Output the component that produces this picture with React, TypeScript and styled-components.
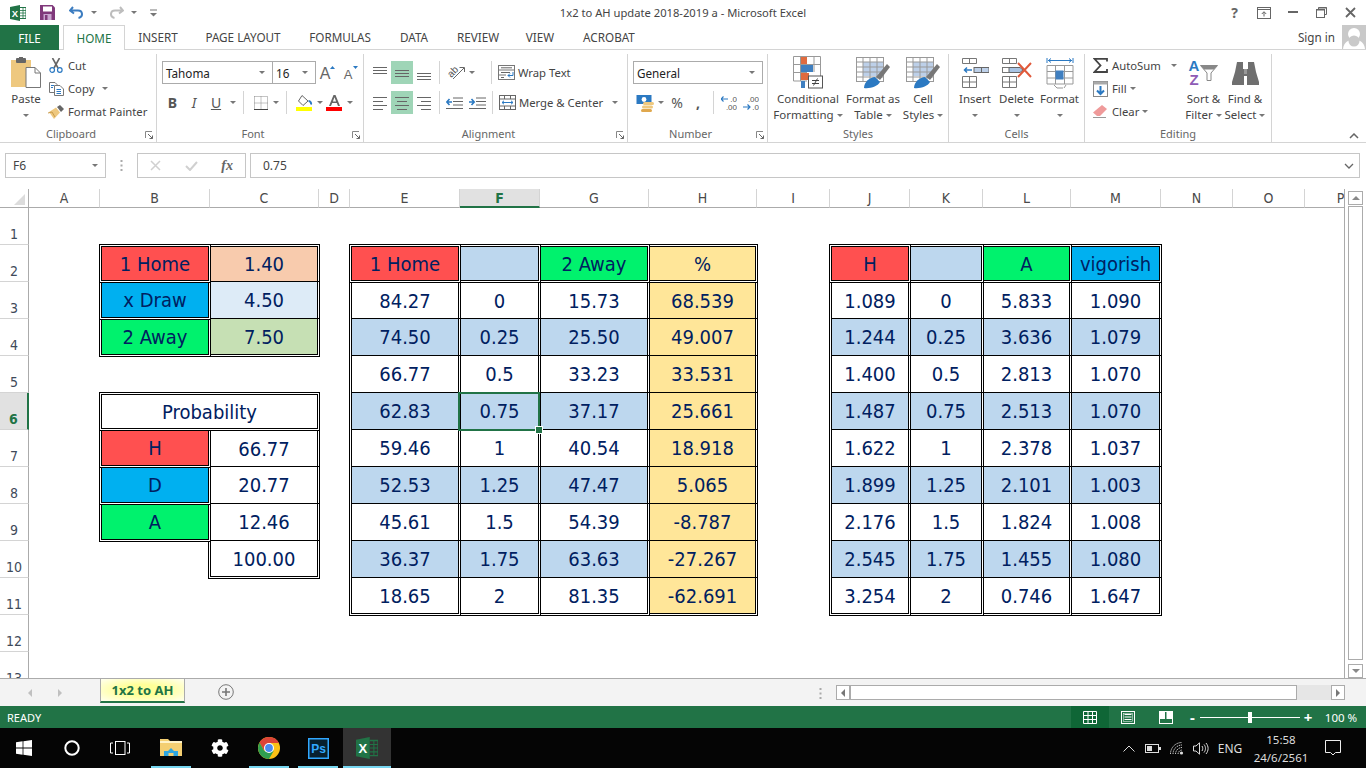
import React from 'react'
import styled, { createGlobalStyle } from 'styled-components'
import { FaCog } from 'react-icons/fa'

const uiFont = `"Noto Sans", "Open Sans", sans-serif`
const cellFont = `"DejaVu Sans Condensed", "DejaVu Sans", sans-serif`
const excelGreen = '#217346'

const GlobalStyle = createGlobalStyle`
    html, body { margin: 0; padding: 0; background: #fff; }
    body { width: 1366px; height: 768px; overflow: hidden; font-family: ${uiFont}; color: #444; }
    * { box-sizing: border-box; }
    svg { display: block; flex: none; }
`

const Page = styled.div`
    width: 1366px;
    height: 768px;
    display: flex;
    flex-direction: column;
    overflow: hidden;
`

/* title bar */
const TitleBar = styled.div`
    height: 25px;
    display: grid;
    grid-template-columns: 1fr auto 1fr;
    align-items: center;
`
const Qat = styled.div`
    display: flex;
    align-items: center;
    padding-left: 10px;
`
const QatSlot = styled.span<{ $w: number }>`
    width: ${p => p.$w}px;
    display: flex;
    align-items: center;
`
const TitleText = styled.div`
    font-size: 11.2px;
    color: #444;
`
const WindowButtons = styled.div`
    display: flex;
    justify-content: flex-end;
    align-items: center;
    padding-right: 1px;
`
const WinBtn = styled.span`
    width: 29px;
    height: 25px;
    display: flex;
    align-items: center;
    justify-content: center;
    color: #666;
    font-weight: 700;
    font-size: 14px;
`

/* tabs */
const TabRow = styled.div`
    height: 25px;
    display: flex;
    border-bottom: 1px solid #d4d4d4;
`
const FileTab = styled.div`
    width: 59px;
    height: 25px;
    margin-right: 4px;
    background: ${excelGreen};
    color: #fff;
    font-size: 11.7px;
    display: flex;
    align-items: center;
    justify-content: center;
`
const HomeTab = styled.div`
    width: 62px;
    height: 25px;
    background: #fff;
    border: 1px solid #d4d4d4;
    border-bottom: none;
    color: ${excelGreen};
    font-size: 11.7px;
    display: flex;
    align-items: center;
    justify-content: center;
`
const Tab = styled.div<{ $w: number }>`
    width: ${p => p.$w}px;
    font-size: 11.7px;
    color: #444;
    display: flex;
    align-items: center;
    justify-content: center;
`
const SignIn = styled.div`
    margin-left: auto;
    display: flex;
    align-items: center;
    font-size: 11.7px;
    gap: 7px;
`
const Avatar = styled.div`
    width: 24px;
    height: 24px;
    background: #c9c9c9;
    overflow: hidden;
`

/* ribbon */
const Ribbon = styled.div`
    height: 93px;
    display: flex;
    border-bottom: 1px solid #d4d4d4;
    position: relative;
`
const Group = styled.div<{ $w: number }>`
    width: ${p => p.$w}px;
    height: 88px;
    margin-top: 4px;
    border-right: 1px solid #d4d4d4;
    position: relative;
    display: flex;
    flex-direction: column;
`
const GroupBody = styled.div<{ $pl?: number }>`
    flex: 1;
    display: flex;
    padding-left: ${p => p.$pl ?? 0}px;
`
const GroupLabel = styled.div<{ $launcher?: boolean }>`
    height: 16px;
    line-height: 15px;
    text-align: center;
    font-size: 11px;
    color: #666;
    padding-right: ${p => (p.$launcher ? 14 : 0)}px;
`
const Launcher = styled.span`
    position: absolute;
    right: 3px;
    bottom: 3px;
`
const Collapse = styled.span`
    position: absolute;
    right: 7px;
    bottom: 3px;
`
const BigBtn = styled.div<{ $w: number }>`
    width: ${p => p.$w}px;
    display: flex;
    flex-direction: column;
    align-items: center;
    font-size: 11.5px;
    line-height: 16px;
    color: #444;
`
const BigIcon = styled.div`
    height: 37px;
    display: flex;
    align-items: center;
    justify-content: center;
`
const Line = styled.div`
    display: flex;
    align-items: center;
    gap: 3px;
    white-space: nowrap;
    height: 16px;
`
const Caret = styled.span<{ $ml?: number }>`
    display: inline-block;
    width: 0;
    height: 0;
    margin-left: ${p => p.$ml ?? 0}px;
    border-left: 3.5px solid transparent;
    border-right: 3.5px solid transparent;
    border-top: 3.5px solid #777;
    flex: none;
`
const SmallCol = styled.div<{ $w?: number }>`
    display: flex;
    flex-direction: column;
    ${p => (p.$w ? `width: ${p.$w}px;` : '')}
`
const SmallRow = styled.div`
    height: 23px;
    display: flex;
    align-items: center;
    font-size: 11.3px;
    color: #444;
    white-space: nowrap;
`
const SmallIcon = styled.span<{ $w: number }>`
    width: ${p => p.$w}px;
    display: flex;
    justify-content: center;
    flex: none;
`
const Rows = styled.div`
    display: flex;
    flex-direction: column;
    gap: 7px;
    padding-top: 7px;
`
const ToolRow = styled.div`
    height: 23px;
    display: flex;
    align-items: center;
`
const Combo = styled.div<{ $w: number }>`
    width: ${p => p.$w}px;
    height: 23px;
    border: 1px solid #ababab;
    background: #fff;
    color: #222;
    font-size: 11.7px;
    padding: 0 7px 0 3px;
    display: flex;
    align-items: center;
    justify-content: space-between;
    & + & { margin-left: -1px; }
`
const Tool = styled.span<{ $w: number; $on?: boolean }>`
    width: ${p => p.$w}px;
    height: 23px;
    display: flex;
    align-items: center;
    justify-content: center;
    font-size: 14px;
    color: #555;
    background: ${p => (p.$on ? '#9fd5b7' : 'transparent')};
    flex: none;
`
const ToolSep = styled.span<{ $ml: number; $mr: number }>`
    width: 1px;
    height: 23px;
    background: #d4d4d4;
    margin: 0 ${p => p.$mr}px 0 ${p => p.$ml}px;
    flex: none;
`
const SortLetters = styled.span`
    display: flex;
    flex-direction: column;
    align-items: center;
    font-family: "Liberation Sans", sans-serif;
    font-size: 15px;
    font-weight: 700;
    line-height: 14px;
    margin-right: 1px;
`
const SortLetter = styled.span<{ $c: string }>`
    color: ${p => p.$c};
`
const SortBox = styled.div`
    display: flex;
    align-items: center;
`

/* formula bar */
const FormulaRow = styled.div`
    height: 46px;
    padding: 10px 6px 0 5px;
    display: flex;
`
const FieldBox = styled.div`
    height: 25px;
    border: 1px solid #c6c6c6;
    background: #fff;
    font-size: 12px;
    color: #444;
    display: flex;
    align-items: center;
`
const NameBox = styled(FieldBox)`
    width: 101px;
    padding: 0 7px;
    justify-content: space-between;
`
const Grip = styled.div`
    width: 31px;
    height: 25px;
    display: flex;
    align-items: center;
    justify-content: center;
`
const FxBox = styled(FieldBox)`
    width: 109px;
    margin-right: 4px;
`
const FxSlot = styled.span`
    width: 36px;
    display: flex;
    justify-content: center;
`
const FxLabel = styled.span`
    font-family: "Liberation Serif", serif;
    font-style: italic;
    font-weight: 700;
    font-size: 14px;
    color: #666;
`
const InputBox = styled(FieldBox)`
    flex: 1;
    padding: 0 5px 0 12px;
    justify-content: space-between;
`

/* worksheet */
const SheetWrap = styled.div`
    height: 489px;
    display: flex;
`
const Sheet = styled.div`
    width: 1345px;
    height: 489px;
    overflow: hidden;
    border-right: 1px solid #ababab;
    display: grid;
    grid-template-columns: 29px 71px 110px 109px 31px 110px 80px 109px 108px 73px 80px 73px 88px 90px 72px 72px 72px;
    grid-template-rows: 19px repeat(13, 37px);
`
const Corner = styled.div`
    border-right: 1px solid #ababab;
    border-bottom: 1px solid #ababab;
    display: flex;
    align-items: flex-end;
    justify-content: flex-end;
    padding: 0 3px 2px 0;
`
const ColHead = styled.div<{ $on?: boolean }>`
    font-family: ${cellFont};
    font-size: 14px;
    line-height: 18px;
    text-align: center;
    color: ${p => (p.$on ? excelGreen : '#4a4a4a')};
    font-weight: ${p => (p.$on ? 700 : 400)};
    background: ${p => (p.$on ? '#e1e1e1' : '#fff')};
    border-right: 1px solid #d4d4d4;
    border-bottom: ${p => (p.$on ? `2px solid ${excelGreen}` : '1px solid #ababab')};
`
const RowHead = styled.div<{ $on?: boolean }>`
    font-family: ${cellFont};
    font-size: 14px;
    display: flex;
    align-items: flex-end;
    justify-content: center;
    padding-bottom: 2px;
    color: ${p => (p.$on ? excelGreen : '#3f4a5a')};
    font-weight: ${p => (p.$on ? 700 : 400)};
    background: ${p => (p.$on ? '#e1e1e1' : '#fff')};
    border-right: ${p => (p.$on ? `2px solid ${excelGreen}` : '1px solid #ababab')};
    border-bottom: 1px solid #d4d4d4;
`
type Edge = 'D' | 'T' | 'a' | 'W' | ''
const edgeMargin = (v: Edge) => (v === 'D' ? -1 : v === 'a' ? 1 : v === 'W' ? -2 : 0)
const edgeLine = (side: string, v: Edge) =>
    v === 'D' || v === 'W' ? `border-${side}: 3px double #000;` : v === 'T' ? `border-${side}: 1px solid #000;` : ''

const Cell = styled.div<{ $fill?: string; $t: Edge; $r: Edge; $b: Edge; $l: Edge; $span?: number }>`
    position: relative;
    min-width: 0;
    background: ${p => p.$fill ?? '#fff'};
    background-clip: padding-box;
    font-family: ${cellFont};
    font-size: 20px;
    color: #002060;
    display: flex;
    align-items: center;
    justify-content: center;
    margin: ${p => edgeMargin(p.$t)}px ${p => edgeMargin(p.$r)}px ${p => edgeMargin(p.$b)}px ${p => edgeMargin(p.$l)}px;
    ${p => edgeLine('top', p.$t)}
    ${p => edgeLine('right', p.$r)}
    ${p => edgeLine('bottom', p.$b)}
    ${p => edgeLine('left', p.$l)}
    ${p => (p.$span ? `grid-column: span ${p.$span};` : '')}
`
const Selection = styled.div`
    position: absolute;
    left: -3px;
    right: -2px;
    top: -1px;
    bottom: -2px;
    border: 2px solid ${excelGreen};
    z-index: 2;
`
const Handle = styled.div`
    position: absolute;
    right: -4px;
    bottom: -4px;
    width: 6px;
    height: 6px;
    background: ${excelGreen};
    box-shadow: 0 0 0 1px #fff;
`

const VScroll = styled.div`
    width: 21px;
    padding: 2px 3px 0 3px;
    display: flex;
    flex-direction: column;
    gap: 1px;
`
const ScrollBtn = styled.div<{ $h: number }>`
    height: ${p => p.$h}px;
    border: 1px solid #ababab;
    background: #fff;
    display: flex;
    align-items: center;
    justify-content: center;
    flex: none;
`
const VThumb = styled.div`
    height: 455px;
    margin-bottom: 3px;
    border: 1px solid #ababab;
    background: #fff;
`

/* sheet tabs */
const SheetBar = styled.div`
    height: 28px;
    background: #f3f3f3;
    border-top: 1px solid #ababab;
    display: flex;
`
const NavArea = styled.div`
    width: 100px;
    height: 27px;
    display: flex;
    align-items: center;
    padding-left: 26px;
    gap: 22px;
`
const SheetTab = styled.div`
    width: 85px;
    height: 24px;
    border-left: 1px solid #ababab;
    border-right: 1px solid #ababab;
    border-bottom: 2px solid ${excelGreen};
    background: radial-gradient(ellipse at center, #ffff99 35%, #fffff0 100%);
    color: ${excelGreen};
    font-size: 13px;
    font-weight: 700;
    display: flex;
    align-items: center;
    justify-content: center;
`
const AddSheet = styled.div`
    width: 16px;
    height: 16px;
    margin: 5px 0 0 33px;
`
const Dots = styled.div`
    width: 3px;
    margin: 9px 0 0 585px;
`
const HScroll = styled.div`
    margin: 6px 0 0 14px;
    width: 509px;
    height: 15px;
    display: flex;
    background: #e6e6e6;
`
const HBtn = styled.div`
    width: 14px;
    height: 15px;
    border: 1px solid #ababab;
    background: #fff;
    display: flex;
    align-items: center;
    justify-content: center;
    flex: none;
`
const HThumb = styled.div`
    width: 447px;
    margin-left: 0;
    margin-right: 34px;
    border: 1px solid #ababab;
    background: #fff;
    flex: none;
`

/* status bar */
const StatusBar = styled.div`
    height: 22px;
    background: ${excelGreen};
    color: #fff;
    font-size: 11px;
    display: flex;
    align-items: center;
    padding-left: 7px;
`
const StatusRight = styled.div`
    margin-left: auto;
    display: flex;
    align-items: center;
    height: 22px;
`
const ViewBtn = styled.div<{ $on?: boolean }>`
    width: 38px;
    height: 22px;
    background: ${p => (p.$on ? '#0f6636' : 'transparent')};
    display: flex;
    align-items: center;
    justify-content: center;
`
const ZoomSign = styled.span<{ $w: number }>`
    width: ${p => p.$w}px;
    font-size: 15px;
    font-weight: 700;
    text-align: center;
    line-height: 22px;
`
const ZoomTrack = styled.div`
    width: 100px;
    height: 1px;
    background: #fff;
    position: relative;
`
const ZoomThumb = styled.div`
    position: absolute;
    left: 48px;
    top: -5px;
    width: 4px;
    height: 11px;
    background: #fff;
`
const ZoomPct = styled.span`
    width: 50px;
    text-align: center;
    font-size: 11.5px;
`

/* taskbar */
const Taskbar = styled.div`
    height: 40px;
    background: #050505;
    color: #ddd;
    display: flex;
`
const TaskBtn = styled.div<{ $ml?: number; $open?: boolean; $active?: boolean }>`
    width: 48px;
    height: 40px;
    margin-left: ${p => p.$ml ?? 0}px;
    position: relative;
    display: flex;
    align-items: center;
    justify-content: center;
    background: ${p => (p.$active ? '#333' : 'transparent')};
    ${p =>
        p.$open
            ? `&::after {
        content: '';
        position: absolute;
        bottom: 0;
        height: 2px;
        background: #76d6f0;
        left: ${p.$active ? 0 : 4}px;
        right: ${p.$active ? 0 : 4}px;
    }`
            : ''}
`
const Tray = styled.div`
    margin-left: auto;
    display: flex;
    align-items: center;
    padding-right: 15px;
    height: 40px;
`
const TrayItem = styled.div<{ $w: number }>`
    width: ${p => p.$w}px;
    display: flex;
    align-items: center;
    justify-content: center;
    font-size: 12px;
`
const Clock = styled.div`
    width: 68px;
    padding-top: 2px;
    text-align: center;
    font-size: 11.5px;
    line-height: 18px;
`

/* ---- icons ---- */
const ExcelMark = ({ size = 16, light = false }: { size?: number; light?: boolean }) => (
    <svg width={size} height={size} viewBox="0 0 16 16">
        <path d="M0 2 L10 0 V16 L0 14 Z" fill={excelGreen} />
        <path d="M10 2.5 H16 V13.5 H10" fill={light ? '#fff' : 'none'} stroke={excelGreen} strokeWidth="1" />
        <path d="M10 5.5 H16 M10 8 H16 M10 10.8 H16 M13 2.5 V13.5" stroke={excelGreen} strokeWidth="0.8" />
        <text x="5" y="11.6" fontSize="9.5" fontWeight="700" fill="#fff" textAnchor="middle" fontFamily="Liberation Sans">X</text>
    </svg>
)
const SaveIcon = () => (
    <svg width="15" height="15" viewBox="0 0 15 15">
        <path d="M0 0 H12.5 L15 2.5 V15 H0 Z" fill="#80397b" />
        <rect x="3" y="1.5" width="9" height="5" fill="#fff" />
        <rect x="3.5" y="9" width="8" height="6" fill="#c9a6d0" />
        <rect x="5" y="10" width="2.5" height="5" fill="#80397b" />
    </svg>
)
const UndoIcon = ({ c }: { c: string }) => (
    <svg width="15" height="13" viewBox="0 0 15 13">
        <path d="M4 1 L1 4.5 L5 7.5 M1.5 4.5 H9 C14 4.5 14.5 11 9.5 12" fill="none" stroke={c} strokeWidth="2" />
    </svg>
)
const RedoIcon = ({ c }: { c: string }) => (
    <svg width="15" height="13" viewBox="0 0 15 13">
        <path d="M11 1 L14 4.5 L10 7.5 M13.5 4.5 H6 C1 4.5 0.5 11 5.5 12" fill="none" stroke={c} strokeWidth="2" />
    </svg>
)
const CustomizeIcon = () => (
    <svg width="7" height="8" viewBox="0 0 7 8">
        <path d="M0 1 H7" stroke="#777" />
        <path d="M0 4 H7 L3.5 7.5 Z" fill="#777" />
    </svg>
)
const DisplayIcon = () => (
    <svg width="14" height="12" viewBox="0 0 14 12">
        <rect x="0.5" y="0.5" width="13" height="11" fill="none" stroke="#666" />
        <path d="M0.5 2.5 H13.5" stroke="#666" />
        <path d="M7 9.5 V5 M4.8 7 L7 4.7 L9.2 7" fill="none" stroke="#666" />
    </svg>
)
const MinIcon = () => (
    <svg width="10" height="3" viewBox="0 0 10 3">
        <rect width="10" height="2" fill="#666" />
    </svg>
)
const RestoreIcon = () => (
    <svg width="11" height="11" viewBox="0 0 11 11">
        <path d="M2.5 2.5 V0.5 H10.5 V7.5 H8.5" fill="none" stroke="#666" />
        <rect x="0.5" y="2.5" width="8" height="8" fill="none" stroke="#666" />
        <path d="M0 3 H9 M2.5 1 H11" stroke="#666" />
    </svg>
)
const CloseIcon = () => (
    <svg width="11" height="11" viewBox="0 0 11 11">
        <path d="M1 1 L10 10 M10 1 L1 10" stroke="#666" strokeWidth="1.8" />
    </svg>
)
const AvatarIcon = () => (
    <svg width="24" height="24" viewBox="0 0 24 24">
        <circle cx="12" cy="9" r="6" fill="#fff" />
        <path d="M1 24 C2 16 7 15 12 15 C17 15 22 16 23 24 Z" fill="#fff" />
        <circle cx="12" cy="16" r="5.5" fill="#c9c9c9" />
    </svg>
)
const LauncherIcon = () => (
    <svg width="8" height="8" viewBox="0 0 8 8">
        <path d="M0.5 7 V0.5 H7" fill="none" stroke="#888" />
        <path d="M3 3 L7.5 7.5 M7.5 4.5 V7.5 H4.5" fill="none" stroke="#666" />
    </svg>
)
const PasteIcon = () => (
    <svg width="30" height="31" viewBox="0 0 30 31">
        <rect x="0" y="3" width="20" height="27" fill="#eec87f" />
        <rect x="5" y="1" width="10" height="5" rx="1" fill="#666" />
        <rect x="8" y="0" width="4" height="3" fill="#666" />
        <path d="M15 10.5 H24 L29.5 16 V30.5 H15 Z" fill="#fff" stroke="#777" />
        <path d="M24 10.5 V16 H29.5" fill="none" stroke="#777" />
    </svg>
)
const CutIcon = () => (
    <svg width="14" height="15" viewBox="0 0 14 15">
        <path d="M3.5 0 L9 10 M10.5 0 L5 10" stroke="#666" strokeWidth="1.6" />
        <circle cx="3.2" cy="12" r="2.3" fill="none" stroke="#2b79c2" strokeWidth="1.2" />
        <circle cx="10.8" cy="12" r="2.3" fill="none" stroke="#2b79c2" strokeWidth="1.2" />
    </svg>
)
const CopyIcon = () => (
    <svg width="15" height="14" viewBox="0 0 15 14">
        <path d="M0.5 0.5 H6 L8 2.5 V10.5 H0.5 Z" fill="#fff" stroke="#777" />
        <path d="M5.5 3.5 H11 L14.5 7 V13.5 H5.5 Z" fill="#fff" stroke="#777" />
        <path d="M7.5 7.5 H12 M7.5 9.5 H12 M7.5 11.5 H12 M2 3.5 H5 M2 5.5 H4" stroke="#2b79c2" />
    </svg>
)
const PainterIcon = () => (
    <svg width="16" height="14" viewBox="0 0 16 14">
        <path d="M9 2 L12 0 L16 4 L13 7 Z" fill="#666" />
        <path d="M1 7 L8 2.5 L12 7.5 L6 14 Z" fill="#eec87f" />
        <path d="M0 8 L4 7 L7 12" fill="none" stroke="#c99b4a" />
    </svg>
)
const GrowFont = ({ down }: { down?: boolean }) => (
    <svg width="18" height="20" viewBox="0 0 18 20">
        <text x="6" y="16" fontSize={down ? 13 : 16} textAnchor="middle" fill="#666" fontFamily="Liberation Sans">A</text>
        <path d={down ? 'M11 3 H16 L13.5 6 Z' : 'M11 6 H16 L13.5 3 Z'} fill="#2b79c2" />
    </svg>
)
const BordersIcon = () => (
    <svg width="14" height="14" viewBox="0 0 14 14">
        <path d="M0.5 0.5 H13.5 V13.5 M0.5 0.5 V13.5 M7 0.5 V13.5 M0.5 7 H13.5" fill="none" stroke="#888" strokeDasharray="1 1" />
        <path d="M0 13.5 H14" stroke="#444" />
    </svg>
)
const FillIcon = () => (
    <svg width="17" height="16" viewBox="0 0 17 16">
        <path d="M6 0.5 L12 6 L7 10.5 L2.5 6 Z" fill="#fff" stroke="#666" />
        <path d="M12.5 6 C14.5 6 15.5 8 15 9.5" fill="none" stroke="#2b79c2" strokeWidth="2" />
        <rect y="12" width="16" height="4" fill="#ffff00" />
    </svg>
)
const FontColorIcon = () => (
    <svg width="17" height="17" viewBox="0 0 17 17">
        <path d="M3 12 L7.5 1 H9.5 L14 12 H12 L10.8 9 H6.2 L5 12 Z M6.9 7.4 H10.1 L8.5 3.2 Z" fill="#666" fillRule="evenodd" />
        <rect y="13" width="16" height="4" fill="#ff0000" />
    </svg>
)
const AlignLines = ({ lines }: { lines: [number, number, number][] }) => (
    <svg width="15" height="16" viewBox="0 0 15 16">
        {lines.map(([x, w, y]) => (
            <rect key={y} x={x} y={y} width={w} height="1" fill="#666" />
        ))}
    </svg>
)
const Lines3 = (a: number, x: number[], w: number[]) =>
    <AlignLines lines={[[x[0], w[0], a], [x[1], w[1], a + 3], [x[2], w[2], a + 6]]} />
const AlignLines4 = ({ kind }: { kind: 'l' | 'c' | 'r' }) => {
    const ws = [14, 10, 14, 10]
    return (
        <AlignLines
            lines={ws.map((w, i) => [kind === 'l' ? 0 : kind === 'r' ? 14 - w : (14 - w) / 2, w, 2 + i * 4] as [number, number, number])}
        />
    )
}
const OrientIcon = () => (
    <svg width="24" height="22" viewBox="0 0 24 22">
        <text x="9" y="13" fontSize="10" fill="#555" textAnchor="middle" transform="rotate(-45 9 10)" fontFamily="Liberation Sans">ab</text>
        <path d="M9 17 L20 6 M15.5 5.5 H20.5 V10" fill="none" stroke="#666" />
    </svg>
)
const IndentIcon = ({ out }: { out?: boolean }) => (
    <svg width="17" height="12" viewBox="0 0 17 12">
        <path d="M7 1 H17 M7 4.5 H17 M7 8 H17 M0 11.5 H17" stroke="#666" />
        <path d={out ? 'M6 5 H1 M3.5 2 L0.8 5 L3.5 8' : 'M0 5 H5 M2.5 2 L5.2 5 L2.5 8'} fill="none" stroke="#2b79c2" strokeWidth="1.6" />
    </svg>
)
const WrapIcon = () => (
    <svg width="17" height="15" viewBox="0 0 17 15">
        <rect x="0.5" y="0.5" width="16" height="14" fill="#fff" stroke="#777" />
        <path d="M0.5 5 H16.5 M0.5 10 H8" stroke="#777" />
        <path d="M3 2.8 H14 M3 7.5 H12 M3 12.5 H6" stroke="#666" />
        <path d="M15 7 V10.5 H10 M12 8.5 L10 10.5 L12 12.5" fill="none" stroke="#2b79c2" />
    </svg>
)
const MergeIcon = () => (
    <svg width="17" height="15" viewBox="0 0 17 15">
        <rect x="0.5" y="0.5" width="16" height="14" fill="#fff" stroke="#666" />
        <path d="M0.5 4 H16.5 M0.5 11 H16.5 M5.5 0.5 V4 M11.5 0.5 V4 M5.5 11 V14.5 M11.5 11 V14.5" stroke="#666" />
        <path d="M3 7.5 H14 M5 5.8 L3 7.5 L5 9.2 M12 5.8 L14 7.5 L12 9.2" fill="none" stroke="#2b79c2" />
    </svg>
)
const CurrencyIcon = () => (
    <svg width="19" height="18" viewBox="0 0 19 18">
        <rect x="0.5" y="1" width="15" height="9" fill="#2b79c2" />
        <circle cx="8" cy="5.5" r="2.4" fill="#fff" />
        <rect x="7" y="8" width="11" height="3" rx="1.5" fill="#eec87f" />
        <rect x="6" y="11.5" width="11" height="3" rx="1.5" fill="#eec87f" />
        <rect x="5" y="15" width="11" height="3" rx="1.5" fill="#e0a84e" />
    </svg>
)
const DecIcon = ({ less }: { less?: boolean }) => (
    <svg width="16" height="20" viewBox="0 0 16 20">
        <text x="16" y="9" fontSize="8" fill="#555" textAnchor="end" fontFamily="Liberation Sans">{less ? '.00' : '.0'}</text>
        <text x="16" y="17" fontSize="8" fill="#555" textAnchor="end" fontFamily="Liberation Sans">{less ? '.0' : '.00'}</text>
        <path d={less ? 'M0 14 H7 M4.5 11.5 L7 14 L4.5 16.5' : 'M0 6 H7 M2.5 3.5 L0 6 L2.5 8.5'} fill="none" stroke="#2b79c2" strokeWidth="1.2" />
    </svg>
)
const CondIcon = () => (
    <svg width="30" height="33" viewBox="0 0 30 33">
        <path d="M0.5 0.5 H27.5 V25 M0.5 0.5 V25 H14 M0.5 8.5 H27.5 M0.5 16.5 H14 M7.5 0.5 V25 M21 0.5 V16" fill="none" stroke="#999" />
        <rect x="8" y="1" width="6" height="7" fill="#e06b3f" />
        <rect x="8" y="9" width="12" height="7" fill="#3f7fc0" />
        <rect x="8" y="17" width="8" height="7" fill="#e06b3f" />
        <rect x="8" y="25" width="4" height="7" fill="#3f7fc0" />
        <rect x="15.5" y="20" width="14" height="12" fill="#fff" stroke="#555" />
        <path d="M19 24.5 H26 M19 27.5 H26 M24.5 22.5 L20.5 29.5" stroke="#444" />
    </svg>
)
const TableStyleIcon = () => (
    <svg width="34" height="32" viewBox="0 0 34 32">
        <rect x="0.5" y="0.5" width="27" height="24" fill="#fff" stroke="#999" />
        <rect x="7" y="5" width="20" height="14" fill="#bdd0e9" />
        <path d="M0.5 5 H27.5 M0.5 10 H27.5 M0.5 15 H27.5 M0.5 20 H27.5 M7 0.5 V25 M14 0.5 V25 M21 0.5 V25" stroke="#999" />
        <path d="M20 20 L31 7 L34 10 L24 23 Z" fill="#777" />
        <path d="M8 31 C8 25 14 20 19 20 L24 25 C22 29 14 32 8 31 Z" fill="#2b79c2" />
    </svg>
)
const InsertIcon = () => (
    <svg width="27" height="30" viewBox="0 0 27 30">
        <path d="M0.5 0.5 H14.5 V5.5 H0.5 Z M7.5 0.5 V5.5 M0.5 18.5 H14.5 V29.5 H0.5 Z M7.5 18.5 V29.5 M0.5 24 H14.5" fill="#fff" stroke="#777" />
        <rect x="12" y="9.5" width="15" height="5" fill="#bdd0e9" stroke="#666" />
        <path d="M19.5 9.5 V14.5" stroke="#666" />
        <path d="M10 12 H2.5 M5 9.5 L2.5 12 L5 14.5" fill="none" stroke="#2b79c2" strokeWidth="1.5" />
    </svg>
)
const DeleteIcon = () => (
    <svg width="30" height="30" viewBox="0 0 30 30">
        <path d="M0.5 0.5 H14.5 V5.5 H0.5 Z M7.5 0.5 V5.5 M0.5 18.5 H14.5 V29.5 H0.5 Z M7.5 18.5 V29.5 M0.5 24 H14.5" fill="#fff" stroke="#777" />
        <rect x="0.5" y="9.5" width="8" height="5" fill="#fff" stroke="#777" />
        <path d="M7 9.5 H18 L21 12 L18 14.5 H7 Z" fill="#a9c4e4" stroke="#666" />
        <path d="M16 5 L29 19 M29 5 L16 19" stroke="#e0593a" strokeWidth="2" />
    </svg>
)
const FormatCellsIcon = () => (
    <svg width="28" height="32" viewBox="0 0 28 32">
        <path d="M1 1 V6 M27 1 V6 M2 3.5 H26 M5 1.5 L2.5 3.5 L5 5.5 M23 1.5 L25.5 3.5 L23 5.5" fill="none" stroke="#2b79c2" />
        <path d="M1 8.5 H27 V27 H1 Z M1 14.5 H27 M1 21 H27 M9.5 8.5 V27 M18.5 8.5 V27" fill="#fff" stroke="#999" />
        <rect x="9.5" y="13.5" width="8" height="9" fill="#3f7fc0" />
        <path d="M8 28 L11 31 H17 M20 28 L18 31" fill="none" stroke="#999" />
    </svg>
)
const SigmaIcon = () => (
    <svg width="15" height="15" viewBox="0 0 15 15">
        <path d="M14 3.5 V0.8 H1.5 L7.5 7.5 L1.5 14 H14 V11" fill="none" stroke="#444" strokeWidth="1.8" />
    </svg>
)
const DownFillIcon = () => (
    <svg width="15" height="16" viewBox="0 0 15 16">
        <rect x="0.5" y="0.5" width="14" height="15" fill="#fff" stroke="#888" />
        <rect x="0.5" y="0.5" width="14" height="3" fill="#aaa" />
        <path d="M7.5 5 V13 M4 9.5 L7.5 13 L11 9.5" fill="none" stroke="#2b79c2" strokeWidth="2" />
    </svg>
)
const EraserIcon = () => (
    <svg width="14" height="13" viewBox="0 0 14 13">
        <path d="M9 0 L14 4 L7 11 H4 L0 7.5 Z" fill="#ef9a9a" />
        <path d="M0 12.5 H13" stroke="#999" />
    </svg>
)
const SortIcon = () => (
    <SortBox>
        <SortLetters>
            <SortLetter $c="#2b79c2">A</SortLetter>
            <SortLetter $c="#8e5bb5">Z</SortLetter>
        </SortLetters>
        <svg width="18" height="16" viewBox="0 0 18 16">
            <path d="M0.5 0.5 H17.5 L11 8 V15.5 H7 V8 Z" fill="#fff" stroke="#888" />
            <path d="M0.5 0.5 H17.5 L14 4.5 H4 Z" fill="#888" />
        </svg>
    </SortBox>
)
const FindIcon = () => (
    <svg width="27" height="24" viewBox="0 0 27 24">
        <path d="M5 1 H11 V8 H16 V1 H22 L24 11 L27 21 V24 H15 V15 H12 V24 H0 V21 L3 11 Z" fill="#6f6f6f" />
        <path d="M12 8 H15 V13 H12 Z" fill="#999" />
    </svg>
)
const Tri = ({ dir, c = '#888', s = 8 }: { dir: 'u' | 'd' | 'l' | 'r'; c?: string; s?: number }) => {
    const d = { u: 'M0 6 H8 L4 2 Z', d: 'M0 2 H8 L4 6 Z', l: 'M6 0 V8 L2 4 Z', r: 'M2 0 V8 L6 4 Z' }[dir]
    return (
        <svg width={s} height={s} viewBox="0 0 8 8">
            <path d={d} fill={c} />
        </svg>
    )
}
const WinLogo = () => (
    <svg width="16" height="16" viewBox="0 0 16 16">
        <path d="M0 2.2 L6.6 1.3 V7.5 H0 Z M7.4 1.2 L16 0 V7.5 H7.4 Z M0 8.4 H6.6 V14.7 L0 13.8 Z M7.4 8.4 H16 V16 L7.4 14.8 Z" fill="#fff" />
    </svg>
)
const ExplorerIcon = () => (
    <svg width="22" height="20" viewBox="0 0 22 20">
        <path d="M0 1 H8 L10 3 H22 V18 H0 Z" fill="#f4cf72" />
        <rect x="0" y="3" width="22" height="2" fill="#fff3c8" />
        <path d="M4 18 V13 H8 L11 10 L14 13 H18 V18 H13.5 V15 H8.5 V18 Z" fill="#2fa6e0" />
    </svg>
)
const ChromeIcon = () => (
    <svg width="22" height="22" viewBox="0 0 22 22">
        <circle cx="11" cy="11" r="11" fill="#fbc116" />
        <path d="M11 0 A11 11 0 0 0 1.5 5.5 L6.2 13.8 L11 6 H21 A11 11 0 0 0 11 0 Z" fill="#dc4437" />
        <path d="M1.5 5.5 A11 11 0 0 0 11 22 L15.8 13.8 L6.2 13.8 Z" fill="#2f9e4f" />
        <circle cx="11" cy="11" r="5" fill="#fff" />
        <circle cx="11" cy="11" r="3.9" fill="#4a8bf0" />
    </svg>
)
const PsIcon = () => (
    <svg width="21" height="21" viewBox="0 0 21 21">
        <rect x="0.75" y="0.75" width="19.5" height="19.5" fill="#07202f" stroke="#31a8ff" strokeWidth="1.5" />
        <text x="10.5" y="15" fontSize="12" fontWeight="700" fill="#31a8ff" textAnchor="middle" fontFamily="Liberation Sans">Ps</text>
    </svg>
)
const TaskViewIcon = () => (
    <svg width="20" height="14" viewBox="0 0 20 14">
        <rect x="5.5" y="0.5" width="9.5" height="13" fill="none" stroke="#fff" />
        <path d="M3 2 H0.5 V12 H3 M17 2 H19.5 V12 H17" fill="none" stroke="#fff" />
    </svg>
)
const TrayCaret = () => (
    <svg width="12" height="7" viewBox="0 0 12 7">
        <path d="M0.5 6.5 L6 1 L11.5 6.5" fill="none" stroke="#ddd" />
    </svg>
)
const BatteryIcon = () => (
    <svg width="16" height="9" viewBox="0 0 16 9">
        <rect x="0.5" y="0.5" width="13" height="8" fill="none" stroke="#ddd" />
        <rect x="2" y="2" width="5" height="5" fill="#ddd" />
        <rect x="14" y="3" width="2" height="3" fill="#ddd" />
    </svg>
)
const WifiIcon = () => (
    <svg width="14" height="13" viewBox="0 0 14 13">
        <path d="M0.5 12 C0.5 5.5 5.5 0.5 12 0.5 M3 12 C3 7 7 3 12 3 M5.5 12 C5.5 8.5 8.5 5.5 12 5.5 M8 12 C8 10 10 8 12 8" fill="none" stroke="#ccc" strokeDasharray="1.4 0.8" />
        <circle cx="11.5" cy="11" r="1.6" fill="#ddd" />
    </svg>
)
const VolumeIcon = () => (
    <svg width="16" height="13" viewBox="0 0 16 13">
        <path d="M0.5 4 H3 L6.5 0.8 V12.2 L3 9 H0.5 Z" fill="none" stroke="#ddd" />
        <path d="M9 4 C10 5.5 10 7.5 9 9 M11 2.5 C13 5 13 8 11 10.5 M13 1 C15.8 4.5 15.8 8.5 13 12" fill="none" stroke="#ddd" />
    </svg>
)
const ActionIcon = () => (
    <svg width="16" height="16" viewBox="0 0 16 16">
        <path d="M0.5 0.5 H15.5 V12.5 H10.5 L8 15 L5.5 12.5 H0.5 Z" fill="none" stroke="#eee" />
    </svg>
)
const GridViewIcon = () => (
    <svg width="14" height="13" viewBox="0 0 14 13">
        <path d="M0.5 0.5 H13.5 V12.5 H0.5 Z M0.5 4.5 H13.5 M0.5 8.5 H13.5 M5 0.5 V12.5 M9.5 0.5 V12.5" fill="none" stroke="#fff" />
    </svg>
)
const PageViewIcon = () => (
    <svg width="14" height="13" viewBox="0 0 14 13">
        <rect x="0.5" y="0.5" width="13" height="12" fill="none" stroke="#fff" />
        <path d="M3.5 3.5 H10.5 M3.5 6 H10.5 M3.5 8.5 H10.5" stroke="#fff" />
        <rect x="2.5" y="2.5" width="9" height="8" fill="none" stroke="#fff" strokeWidth="0.5" />
    </svg>
)
const BreakViewIcon = () => (
    <svg width="14" height="13" viewBox="0 0 14 13">
        <rect x="0.5" y="0.5" width="13" height="12" fill="none" stroke="#fff" />
        <rect x="1" y="1" width="5" height="7" fill="#fff" />
        <rect x="7.5" y="1" width="5.5" height="7" fill="#fff" />
    </svg>
)

/* ---- sheet data ---- */
interface CellSpec {
    text?: string
    fill?: string
    t: Edge
    r: Edge
    b: Edge
    l: Edge
    span?: number
}
const RED = '#ff5050'
const SKY = '#00b0f0'
const LIME = '#00f26d'
const BAND = '#bdd7ee'
const GOLD = '#ffe699'

const cells: Record<string, CellSpec> = {}

// rate block
;[
    ['1 Home', RED, '1.40', '#f8cbad'],
    ['x Draw', SKY, '4.50', '#ddebf7'],
    ['2 Away', LIME, '7.50', '#c6e0b4'],
].forEach(([label, labelFill, value, valueFill], i) => {
    const row = i + 2
    cells[`B${row}`] = { text: label, fill: labelFill, t: i === 0 ? 'D' : 'a', r: 'D', b: 'D', l: 'D' }
    cells[`C${row}`] = { text: value, fill: valueFill, t: i === 0 ? 'D' : '', r: 'D', b: i === 2 ? 'D' : 'T', l: 'a' }
})

// probability block
cells.B6 = { text: 'Probability', t: 'D', r: 'D', b: 'D', l: 'D', span: 2 }
;[
    ['H', RED, '66.77'],
    ['D', SKY, '20.77'],
    ['A', LIME, '12.46'],
].forEach(([label, fill, value], i) => {
    const row = i + 7
    cells[`B${row}`] = { text: label, fill, t: 'a', r: 'D', b: 'D', l: 'D' }
    cells[`C${row}`] = { text: value, t: i === 0 ? 'a' : '', r: 'D', b: 'T', l: 'a' }
})
cells.C10 = { text: '100.00', t: '', r: 'D', b: 'D', l: 'W' }

const fillTable = (
    columns: string[],
    head: [string, string][],
    body: string[][],
    lastFill?: string,
) => {
    head.forEach(([text, fill], c) => {
        cells[`${columns[c]}2`] = { text, fill, t: 'D', r: 'D', b: 'D', l: c === 0 ? 'D' : 'a' }
    })
    body.forEach((values, i) => {
        const row = i + 3
        values.forEach((text, c) => {
            const band = i % 2 === 1 ? BAND : undefined
            cells[`${columns[c]}${row}`] = {
                text,
                fill: lastFill && c === 3 ? lastFill : band,
                t: i === 0 ? 'a' : '',
                r: 'D',
                b: i === body.length - 1 ? 'D' : 'T',
                l: c === 0 ? 'D' : 'a',
            }
        })
    })
}

fillTable(
    ['E', 'F', 'G', 'H'],
    [['1 Home', RED], ['', BAND], ['2 Away', LIME], ['%', GOLD]],
    [
        ['84.27', '0', '15.73', '68.539'],
        ['74.50', '0.25', '25.50', '49.007'],
        ['66.77', '0.5', '33.23', '33.531'],
        ['62.83', '0.75', '37.17', '25.661'],
        ['59.46', '1', '40.54', '18.918'],
        ['52.53', '1.25', '47.47', '5.065'],
        ['45.61', '1.5', '54.39', '-8.787'],
        ['36.37', '1.75', '63.63', '-27.267'],
        ['18.65', '2', '81.35', '-62.691'],
    ],
    GOLD,
)
fillTable(
    ['J', 'K', 'L', 'M'],
    [['H', RED], ['', BAND], ['A', LIME], ['vigorish', SKY]],
    [
        ['1.089', '0', '5.833', '1.090'],
        ['1.244', '0.25', '3.636', '1.079'],
        ['1.400', '0.5', '2.813', '1.070'],
        ['1.487', '0.75', '2.513', '1.070'],
        ['1.622', '1', '2.378', '1.037'],
        ['1.899', '1.25', '2.101', '1.003'],
        ['2.176', '1.5', '1.824', '1.008'],
        ['2.545', '1.75', '1.455', '1.080'],
        ['3.254', '2', '0.746', '1.647'],
    ],
)

const COLUMNS = 'ABCDEFGHIJKLMNOP'.split('')
const ROWS = Array.from({ length: 13 }, (_, i) => i + 1)

function Worksheet() {
    return (
        <Sheet>
            <Corner>
                <svg width="11" height="11" viewBox="0 0 11 11">
                    <path d="M11 0 V11 H0 Z" fill="#dcdcdc" />
                </svg>
            </Corner>
            {COLUMNS.map(c => (
                <ColHead key={c} $on={c === 'F'}>{c}</ColHead>
            ))}
            {ROWS.map(row => (
                <React.Fragment key={row}>
                    <RowHead $on={row === 6}>{row}</RowHead>
                    {COLUMNS.map(c => {
                        if (c === 'C' && row === 6) return null
                        const spec = cells[`${c}${row}`]
                        if (!spec) return <div key={c} />
                        return (
                            <Cell
                                key={c}
                                $fill={spec.fill}
                                $t={spec.t}
                                $r={spec.r}
                                $b={spec.b}
                                $l={spec.l}
                                $span={spec.span}
                            >
                                {spec.text}
                                {c === 'F' && row === 6 && (
                                    <Selection>
                                        <Handle />
                                    </Selection>
                                )}
                            </Cell>
                        )
                    })}
                </React.Fragment>
            ))}
        </Sheet>
    )
}

function RibbonBar() {
    return (
        <Ribbon>
            <Group $w={157}>
                <GroupBody $pl={5}>
                    <BigBtn $w={42}>
                        <BigIcon><PasteIcon /></BigIcon>
                        <Line>Paste</Line>
                        <Line><Caret /></Line>
                    </BigBtn>
                    <SmallCol>
                        <SmallRow><SmallIcon $w={18}><CutIcon /></SmallIcon>&nbsp;Cut</SmallRow>
                        <SmallRow><SmallIcon $w={18}><CopyIcon /></SmallIcon>&nbsp;Copy<Caret $ml={8} /></SmallRow>
                        <SmallRow><SmallIcon $w={18}><PainterIcon /></SmallIcon>&nbsp;Format Painter</SmallRow>
                    </SmallCol>
                </GroupBody>
                <GroupLabel $launcher>Clipboard</GroupLabel>
                <Launcher><LauncherIcon /></Launcher>
            </Group>

            <Group $w={207}>
                <GroupBody $pl={5}>
                    <Rows>
                        <ToolRow>
                            <Combo $w={111}>Tahoma<Caret /></Combo>
                            <Combo $w={44}>16<Caret /></Combo>
                            <Tool $w={24}><GrowFont /></Tool>
                            <Tool $w={22}><GrowFont down /></Tool>
                        </ToolRow>
                        <ToolRow>
                            <Tool $w={21}><b>B</b></Tool>
                            <Tool $w={22}><i>I</i></Tool>
                            <Tool $w={22}><u>U</u></Tool>
                            <Caret $ml={3} />
                            <ToolSep $ml={7} $mr={7} />
                            <Tool $w={20}><BordersIcon /></Tool>
                            <Caret $ml={2} />
                            <ToolSep $ml={7} $mr={7} />
                            <Tool $w={20}><FillIcon /></Tool>
                            <Caret $ml={3} />
                            <Tool $w={22}><FontColorIcon /></Tool>
                            <Caret $ml={2} />
                        </ToolRow>
                    </Rows>
                </GroupBody>
                <GroupLabel $launcher>Font</GroupLabel>
                <Launcher><LauncherIcon /></Launcher>
            </Group>

            <Group $w={264}>
                <GroupBody $pl={5}>
                    <Rows>
                        <ToolRow>
                            <Tool $w={22}>{Lines3(2, [0, 0, 0], [14, 14, 14])}</Tool>
                            <Tool $w={22} $on>{Lines3(5, [0, 0, 0], [14, 14, 14])}</Tool>
                            <Tool $w={22}>{Lines3(8, [0, 0, 0], [14, 14, 14])}</Tool>
                            <ToolSep $ml={4} $mr={4} />
                            <Tool $w={24}><OrientIcon /></Tool>
                            <Caret $ml={1} />
                            <ToolSep $ml={16} $mr={5} />
                            <Tool $w={18}><WrapIcon /></Tool>
                            <SmallRow>&nbsp;Wrap Text</SmallRow>
                        </ToolRow>
                        <ToolRow>
                            <Tool $w={22}><AlignLines4 kind="l" /></Tool>
                            <Tool $w={22} $on><AlignLines4 kind="c" /></Tool>
                            <Tool $w={22}><AlignLines4 kind="r" /></Tool>
                            <ToolSep $ml={4} $mr={4} />
                            <Tool $w={21}><IndentIcon out /></Tool>
                            <Tool $w={24}><IndentIcon /></Tool>
                            <ToolSep $ml={3} $mr={5} />
                            <Tool $w={18}><MergeIcon /></Tool>
                            <SmallRow>&nbsp;Merge &amp; Center<Caret $ml={9} /></SmallRow>
                        </ToolRow>
                    </Rows>
                </GroupBody>
                <GroupLabel $launcher>Alignment</GroupLabel>
                <Launcher><LauncherIcon /></Launcher>
            </Group>

            <Group $w={140}>
                <GroupBody $pl={5}>
                    <Rows>
                        <ToolRow>
                            <Combo $w={130}>General<Caret /></Combo>
                        </ToolRow>
                        <ToolRow>
                            <Tool $w={24}><CurrencyIcon /></Tool>
                            <Caret $ml={1} />
                            <Tool $w={26}>%</Tool>
                            <Tool $w={16}><b>,</b></Tool>
                            <ToolSep $ml={7} $mr={7} />
                            <Tool $w={16}><DecIcon /></Tool>
                            <Tool $w={28}><DecIcon less /></Tool>
                        </ToolRow>
                    </Rows>
                </GroupBody>
                <GroupLabel $launcher>Number</GroupLabel>
                <Launcher><LauncherIcon /></Launcher>
            </Group>

            <Group $w={181}>
                <GroupBody $pl={7}>
                    <BigBtn $w={66}>
                        <BigIcon><CondIcon /></BigIcon>
                        <Line>Conditional</Line>
                        <Line>Formatting<Caret /></Line>
                    </BigBtn>
                    <BigBtn $w={64}>
                        <BigIcon><TableStyleIcon /></BigIcon>
                        <Line>Format as</Line>
                        <Line>Table<Caret /></Line>
                    </BigBtn>
                    <BigBtn $w={36}>
                        <BigIcon><TableStyleIcon /></BigIcon>
                        <Line>Cell</Line>
                        <Line>Styles<Caret /></Line>
                    </BigBtn>
                </GroupBody>
                <GroupLabel>Styles</GroupLabel>
            </Group>

            <Group $w={136}>
                <GroupBody $pl={8}>
                    <BigBtn $w={36}>
                        <BigIcon><InsertIcon /></BigIcon>
                        <Line>Insert</Line>
                        <Line><Caret /></Line>
                    </BigBtn>
                    <BigBtn $w={47}>
                        <BigIcon><DeleteIcon /></BigIcon>
                        <Line>Delete</Line>
                        <Line><Caret /></Line>
                    </BigBtn>
                    <BigBtn $w={39}>
                        <BigIcon><FormatCellsIcon /></BigIcon>
                        <Line>Format</Line>
                        <Line><Caret /></Line>
                    </BigBtn>
                </GroupBody>
                <GroupLabel>Cells</GroupLabel>
            </Group>

            <Group $w={187}>
                <GroupBody $pl={6}>
                    <SmallCol $w={93}>
                        <SmallRow><SmallIcon $w={18}><SigmaIcon /></SmallIcon>&nbsp;AutoSum<Caret $ml={10} /></SmallRow>
                        <SmallRow><SmallIcon $w={18}><DownFillIcon /></SmallIcon>&nbsp;Fill<Caret $ml={3} /></SmallRow>
                        <SmallRow><SmallIcon $w={18}><EraserIcon /></SmallIcon>&nbsp;Clear<Caret $ml={3} /></SmallRow>
                    </SmallCol>
                    <BigBtn $w={39}>
                        <BigIcon><SortIcon /></BigIcon>
                        <Line>Sort &amp;</Line>
                        <Line>Filter<Caret /></Line>
                    </BigBtn>
                    <BigBtn $w={44}>
                        <BigIcon><FindIcon /></BigIcon>
                        <Line>Find &amp;</Line>
                        <Line>Select<Caret /></Line>
                    </BigBtn>
                </GroupBody>
                <GroupLabel>Editing</GroupLabel>
            </Group>

            <Collapse>
                <svg width="10" height="6" viewBox="0 0 10 6">
                    <path d="M1 5 L5 1 L9 5" fill="none" stroke="#666" strokeWidth="1.5" />
                </svg>
            </Collapse>
        </Ribbon>
    )
}

export default function App() {
    return (
        <Page>
            <GlobalStyle />
            <TitleBar>
                <Qat>
                    <QatSlot $w={30}><ExcelMark /></QatSlot>
                    <QatSlot $w={29}><SaveIcon /></QatSlot>
                    <QatSlot $w={22}><UndoIcon c="#3b7cc0" /></QatSlot>
                    <QatSlot $w={18}><Caret /></QatSlot>
                    <QatSlot $w={22}><RedoIcon c="#bdbdbd" /></QatSlot>
                    <QatSlot $w={19}><Caret /></QatSlot>
                    <QatSlot $w={10}><CustomizeIcon /></QatSlot>
                </Qat>
                <TitleText>1x2 to AH update 2018-2019 a - Microsoft Excel</TitleText>
                <WindowButtons>
                    <WinBtn>?</WinBtn>
                    <WinBtn><DisplayIcon /></WinBtn>
                    <WinBtn><MinIcon /></WinBtn>
                    <WinBtn><RestoreIcon /></WinBtn>
                    <WinBtn><CloseIcon /></WinBtn>
                </WindowButtons>
            </TitleBar>

            <TabRow>
                <FileTab>FILE</FileTab>
                <HomeTab>HOME</HomeTab>
                <Tab $w={66}>INSERT</Tab>
                <Tab $w={104}>PAGE LAYOUT</Tab>
                <Tab $w={90}>FORMULAS</Tab>
                <Tab $w={58}>DATA</Tab>
                <Tab $w={70}>REVIEW</Tab>
                <Tab $w={54}>VIEW</Tab>
                <Tab $w={84}>ACROBAT</Tab>
                <SignIn>
                    Sign in
                    <Avatar><AvatarIcon /></Avatar>
                </SignIn>
            </TabRow>

            <RibbonBar />

            <FormulaRow>
                <NameBox>F6<Caret /></NameBox>
                <Grip>
                    <svg width="3" height="11" viewBox="0 0 3 11">
                        <path d="M1.5 0 V2 M1.5 4.5 V6.5 M1.5 9 V11" stroke="#aaa" strokeWidth="2" />
                    </svg>
                </Grip>
                <FxBox>
                    <FxSlot>
                        <svg width="11" height="11" viewBox="0 0 11 11">
                            <path d="M1 1 L10 10 M10 1 L1 10" stroke="#d0d0d0" strokeWidth="1.5" />
                        </svg>
                    </FxSlot>
                    <FxSlot>
                        <svg width="13" height="10" viewBox="0 0 13 10">
                            <path d="M1 5 L5 9 L12 1" fill="none" stroke="#d0d0d0" strokeWidth="2" />
                        </svg>
                    </FxSlot>
                    <FxSlot><FxLabel>fx</FxLabel></FxSlot>
                </FxBox>
                <InputBox>
                    0.75
                    <svg width="10" height="6" viewBox="0 0 10 6">
                        <path d="M1 1 L5 5 L9 1" fill="none" stroke="#666" strokeWidth="1.3" />
                    </svg>
                </InputBox>
            </FormulaRow>

            <SheetWrap>
                <Worksheet />
                <VScroll>
                    <ScrollBtn $h={14}><Tri dir="u" /></ScrollBtn>
                    <VThumb />
                    <ScrollBtn $h={14}><Tri dir="d" /></ScrollBtn>
                </VScroll>
            </SheetWrap>

            <SheetBar>
                <NavArea>
                    <Tri dir="l" c="#c0c0c0" />
                    <Tri dir="r" c="#c0c0c0" />
                </NavArea>
                <SheetTab>1x2 to AH</SheetTab>
                <AddSheet>
                    <svg width="16" height="16" viewBox="0 0 16 16">
                        <circle cx="8" cy="8" r="7.3" fill="none" stroke="#777" />
                        <path d="M8 4 V12 M4 8 H12" stroke="#777" strokeWidth="1.6" />
                    </svg>
                </AddSheet>
                <Dots>
                    <svg width="3" height="11" viewBox="0 0 3 11">
                        <path d="M1.5 0 V2 M1.5 4.5 V6.5 M1.5 9 V11" stroke="#aaa" strokeWidth="2" />
                    </svg>
                </Dots>
                <HScroll>
                    <HBtn><Tri dir="l" c="#777" /></HBtn>
                    <HThumb />
                    <HBtn><Tri dir="r" c="#777" /></HBtn>
                </HScroll>
            </SheetBar>

            <StatusBar>
                READY
                <StatusRight>
                    <ViewBtn $on><GridViewIcon /></ViewBtn>
                    <ViewBtn><PageViewIcon /></ViewBtn>
                    <ViewBtn><BreakViewIcon /></ViewBtn>
                    <ZoomSign $w={15}>-</ZoomSign>
                    <ZoomTrack><ZoomThumb /></ZoomTrack>
                    <ZoomSign $w={16}>+</ZoomSign>
                    <ZoomPct>100 %</ZoomPct>
                </StatusRight>
            </StatusBar>

            <Taskbar>
                <TaskBtn><WinLogo /></TaskBtn>
                <TaskBtn>
                    <svg width="16" height="16" viewBox="0 0 16 16">
                        <circle cx="8" cy="8" r="6.7" fill="none" stroke="#fff" strokeWidth="2" />
                    </svg>
                </TaskBtn>
                <TaskBtn><TaskViewIcon /></TaskBtn>
                <TaskBtn $ml={3} $open><ExplorerIcon /></TaskBtn>
                <TaskBtn $ml={1}><FaCog color="#fff" size={18} /></TaskBtn>
                <TaskBtn $ml={1} $open><ChromeIcon /></TaskBtn>
                <TaskBtn $ml={1} $open><PsIcon /></TaskBtn>
                <TaskBtn $ml={1} $open $active><ExcelMark size={22} /></TaskBtn>
                <Tray>
                    <TrayItem $w={24}><TrayCaret /></TrayItem>
                    <TrayItem $w={24}><BatteryIcon /></TrayItem>
                    <TrayItem $w={24}><WifiIcon /></TrayItem>
                    <TrayItem $w={24}><VolumeIcon /></TrayItem>
                    <TrayItem $w={34}>ENG</TrayItem>
                    <Clock>15:58<br />24/6/2561</Clock>
                    <TrayItem $w={36}><ActionIcon /></TrayItem>
                </Tray>
            </Taskbar>
        </Page>
    )
}
